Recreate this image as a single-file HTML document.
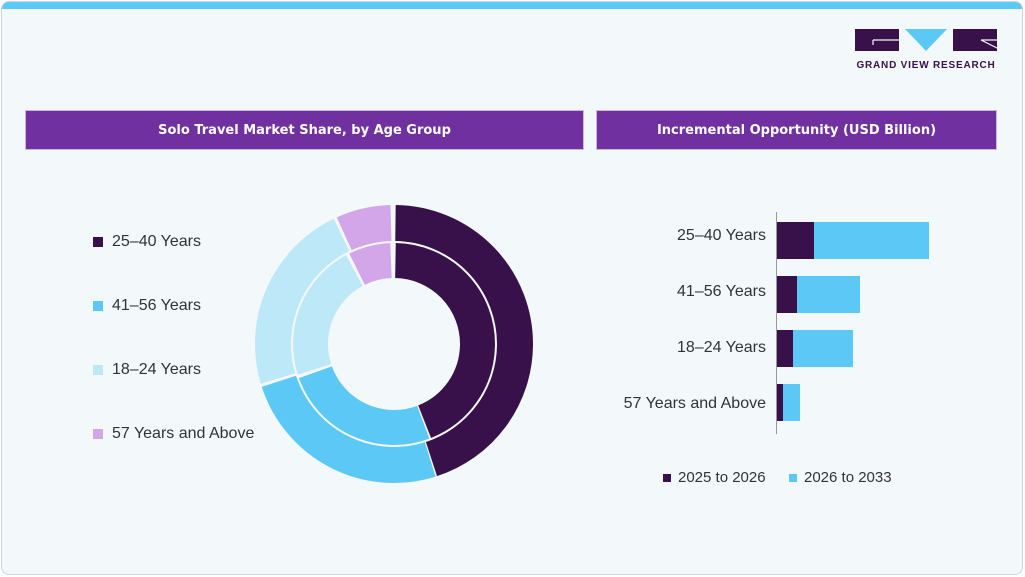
<!DOCTYPE html>
<html><head><meta charset="utf-8"><style>
*{margin:0;padding:0;box-sizing:border-box}
body{width:1025px;height:577px;background:#fff;font-family:"Liberation Sans",sans-serif;position:relative;overflow:hidden}
.card{position:absolute;left:1px;top:1px;width:1022px;height:574px;background:#f3f8fb;border:1px solid #d0d6db;border-radius:8px;overflow:hidden}
.strip{position:absolute;left:0;top:0;width:100%;height:7px;background:#5bc8f5}
.hdr{position:absolute;top:110px;height:40px;background:#7030a0;color:#fff;font-weight:bold;font-family:"DejaVu Sans",sans-serif;font-size:13px;display:flex;align-items:center;justify-content:center;border:1px solid #c9b7dc}
.leg{position:absolute;left:93px;font-size:16px;color:#333;display:flex;align-items:center}
.leg i{display:inline-block;width:10px;height:10px;margin-right:9px}
.lbl{position:absolute;right:259px;font-size:16px;color:#333;text-align:right}
.bar{position:absolute;height:37px}
</style></head><body>
<div class="card"><div class="strip"></div></div>
<svg style="position:absolute;left:855px;top:29px" width="142" height="42">
<rect x="0" y="0" width="44" height="22" fill="#38114a"/>
<path d="M18 11 H44 M18 11 V16" stroke="#f3f8fb" stroke-width="1.2" fill="none"/>
<polygon points="50,0 92,0 71,22" fill="#5bc8f5"/>
<rect x="98" y="0" width="44" height="22" fill="#38114a"/>
<path d="M126 11 L142 19 M126 11 H142" stroke="#f3f8fb" stroke-width="1.2" fill="none"/>
<text x="71" y="39" text-anchor="middle" font-family="Liberation Sans" font-weight="bold" font-size="10" fill="#38114a" letter-spacing="0.8">GRAND VIEW RESEARCH</text>
</svg>
<div class="hdr" style="left:25px;width:559px">Solo Travel Market Share, by Age Group</div>
<div class="hdr" style="left:596px;width:401px">Incremental Opportunity (USD Billion)</div>
<div class="leg" style="top:233px"><i style="background:#38114a"></i>25–40 Years</div>
<div class="leg" style="top:297px"><i style="background:#5bc8f5"></i>41–56 Years</div>
<div class="leg" style="top:361px"><i style="background:#bde8f8"></i>18–24 Years</div>
<div class="leg" style="top:425px"><i style="background:#d3a6ea"></i>57 Years and Above</div>
<svg style="position:absolute;left:0;top:0" width="1025" height="577">
<g fill="none" stroke-width="36">
<circle cx="394" cy="344" r="121" stroke="#38114a" stroke-dasharray="340.4 1000" transform="rotate(-89.3 394 344)"/>
<circle cx="394" cy="344" r="121" stroke="#5bc8f5" stroke-dasharray="188.8 1000" transform="rotate(72.6 394 344)"/>
<circle cx="394" cy="344" r="121" stroke="#bde8f8" stroke-dasharray="170.8 1000" transform="rotate(163.4 394 344)"/>
<circle cx="394" cy="344" r="121" stroke="#d3a6ea" stroke-dasharray="48.3 1000" transform="rotate(245.7 394 344)"/>
</g>
<g fill="none" stroke-width="35">
<circle cx="394" cy="344" r="83.5" stroke="#38114a" stroke-dasharray="229.4 1000" transform="rotate(-89 394 344)"/>
<circle cx="394" cy="344" r="83.5" stroke="#5bc8f5" stroke-dasharray="132.2 1000" transform="rotate(69.5 394 344)"/>
<circle cx="394" cy="344" r="83.5" stroke="#bde8f8" stroke-dasharray="115.6 1000" transform="rotate(162.3 394 344)"/>
<circle cx="394" cy="344" r="83.5" stroke="#d3a6ea" stroke-dasharray="35.3 1000" transform="rotate(243.7 394 344)"/>
</g>
<line x1="776.5" y1="212" x2="776.5" y2="434" stroke="#999" stroke-width="1"/>
</svg>
<div class="lbl" style="top:227px">25–40 Years</div>
<div class="lbl" style="top:283px">41–56 Years</div>
<div class="lbl" style="top:339px">18–24 Years</div>
<div class="lbl" style="top:395px">57 Years and Above</div>
<div class="bar" style="left:777px;top:222px;width:37px;background:#38114a"></div>
<div class="bar" style="left:814px;top:222px;width:115px;background:#5bc8f5"></div>
<div class="bar" style="left:777px;top:276px;width:20px;background:#38114a"></div>
<div class="bar" style="left:797px;top:276px;width:63px;background:#5bc8f5"></div>
<div class="bar" style="left:777px;top:330px;width:16px;background:#38114a"></div>
<div class="bar" style="left:793px;top:330px;width:60px;background:#5bc8f5"></div>
<div class="bar" style="left:777px;top:384px;width:6px;background:#38114a"></div>
<div class="bar" style="left:783px;top:384px;width:17px;background:#5bc8f5"></div>
<div class="leg" style="left:663px;top:469px;font-size:15px"><i style="background:#38114a;width:8px;height:8px;margin-right:7px"></i>2025 to 2026</div>
<div class="leg" style="left:789px;top:469px;font-size:15px"><i style="background:#5bc8f5;width:8px;height:8px;margin-right:7px"></i>2026 to 2033</div>
</body></html>
